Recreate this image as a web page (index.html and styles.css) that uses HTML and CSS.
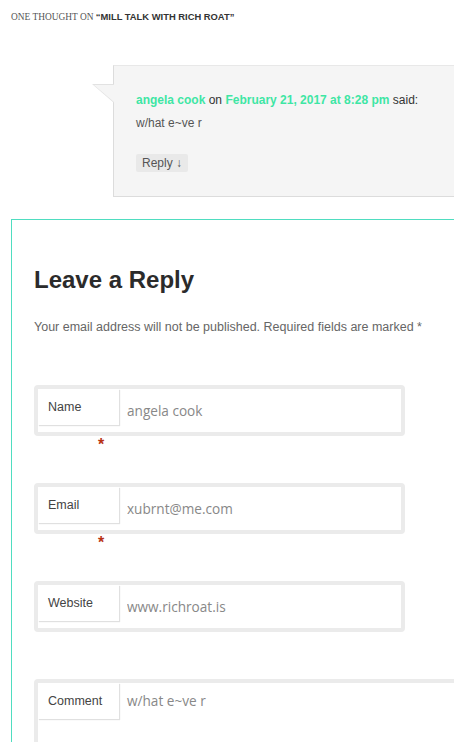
FILE: index.html
```html
<!DOCTYPE html>
<html lang="en">
<head>
    <meta charset="UTF-8">
    <meta name="viewport" content="width=device-width, initial-scale=1.0">
    <title>Mill Talk with Rich Roat - Comments</title>
    <link rel="stylesheet" href="styles.css">
</head>
<body>
    <h2 class="comments-title">One thought on <span>&ldquo;Mill Talk with Rich Roat&rdquo;</span></h2>

    <ol class="comment-list">
        <li class="comment">
            <div class="comment-body">
                <div class="comment-meta">
                    <a href="#" class="comment-author">angela cook</a> on
                    <a href="#" class="comment-date">February 21, 2017 at 8:28 pm</a> said:
                </div>
                <p class="comment-text">w/hat e~ve r</p>
                <a href="#" class="reply-link">Reply &darr;</a>
            </div>
        </li>
    </ol>

    <div class="comment-respond">
        <h3 class="reply-title">Leave a Reply</h3>
        <p class="comment-notes">Your email address will not be published. Required fields are marked *</p>

        <form class="comment-form">
            <div class="field">
                <div class="field-box">
                    <label for="author">Name</label>
                    <input id="author" type="text" value="angela cook">
                </div>
                <span class="required">*</span>
            </div>
            <div class="field">
                <div class="field-box">
                    <label for="email">Email</label>
                    <input id="email" type="text" value="xubrnt@me.com">
                </div>
                <span class="required">*</span>
            </div>
            <div class="field">
                <div class="field-box">
                    <label for="url">Website</label>
                    <input id="url" type="text" value="www.richroat.is">
                </div>
            </div>
            <div class="field field-comment">
                <div class="field-box">
                    <label for="comment">Comment</label>
                    <textarea id="comment">w/hat e~ve r</textarea>
                </div>
            </div>
        </form>
    </div>
</body>
</html>
```

FILE: styles.css
```css
* {
    box-sizing: border-box;
}

body {
    margin: 0;
    font-family: 'Liberation Sans', Arial, sans-serif;
    color: #333;
    background: #fff;
    overflow: hidden;
}

a {
    text-decoration: none;
}

.comments-title {
    margin: 0;
    padding: 11px 11px 0;
    font-family: 'Liberation Serif', serif;
    font-size: 9.4px;
    line-height: 12px;
    font-weight: normal;
    text-transform: uppercase;
    color: #555;
}

.comments-title span {
    font-family: 'Liberation Sans', Arial, sans-serif;
    font-weight: bold;
    color: #333;
}

.comment-list {
    list-style: none;
    margin: 42px -20px 0 113px;
    padding: 0;
}

.comment-body {
    position: relative;
    background: #f5f5f5;
    border: 1px solid #dcdcdc;
    border-top-color: #e8e8e8;
    border-right: none;
    padding: 25px 22px 23px;
    height: 132px;
    font-size: 12px;
}

/* speech bubble tail */
.comment-body::before,
.comment-body::after {
    content: '';
    position: absolute;
    top: 18px;
    width: 0;
    height: 0;
    border-top: 19px solid #e2e2e2;
    border-left: 22px solid transparent;
}

.comment-body::before {
    left: -22px;
}

.comment-body::after {
    left: -20px;
    top: 19px;
    border-top-color: #f5f5f5;
    border-top-width: 17px;
    border-left-width: 20px;
}

.comment-meta {
    line-height: 18px;
    color: #333;
}

.comment-author,
.comment-date {
    color: #3ee6a4;
    font-weight: bold;
}

.comment-text {
    margin: 5px 0 0;
    line-height: 18px;
    color: #555;
}

.reply-link {
    display: inline-block;
    margin-top: 22px;
    padding: 0 6px;
    height: 18px;
    line-height: 18px;
    background: #e9e9e9;
    border-radius: 2px;
    color: #555;
}

.comment-respond {
    margin: 22px -20px 0 11px;
    border-top: 1px solid #4fddc0;
    border-left: 1px solid #4fddc0;
    padding: 44px 0 0 22px;
    height: 600px;
}

.reply-title {
    margin: 0;
    font-size: 24px;
    line-height: 32px;
    font-weight: bold;
    color: #2b2b2b;
}

.comment-notes {
    margin: 22px 0 0;
    font-size: 12.5px;
    line-height: 18px;
    color: #666;
}

.comment-form {
    margin-top: 49px;
}

.field {
    position: relative;
    margin-bottom: 47px;
}

.field-box {
    display: flex;
    width: 371px;
    height: 51px;
    border: 4px solid #ebebeb;
    border-radius: 4px;
    background: #fff;
}

.field-comment .field-box {
    width: 460px;
    height: 120px;
    border-right: none;
    border-bottom: none;
}

.field-box label {
    width: 81px;
    height: 36px;
    padding: 9px 0 0 10px;
    font-size: 12.5px;
    line-height: 18px;
    color: #444;
    background: #fff;
    box-shadow: 1px 1px 1px rgba(0, 0, 0, 0.12);
}

.field-box input,
.field-box textarea {
    flex: 1;
    border: none;
    outline: none;
    background: transparent;
    padding: 0 0 0 8px;
    height: 43px;
    font-family: 'Open Sans', sans-serif;
    font-size: 13.6px;
    color: #888;
    resize: none;
}

.field-box textarea {
    padding-top: 9px;
    line-height: 18px;
}

.required {
    position: absolute;
    left: 64px;
    top: 51px;
    font-size: 16px;
    font-weight: bold;
    color: #b83214;
}
```
